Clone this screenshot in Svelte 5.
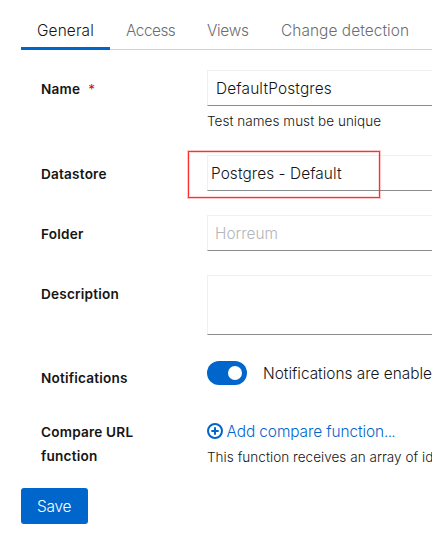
<script>
  const tabs = [
    { label: 'General', current: true, key: 'general' },
    { label: 'Access', key: 'access' },
    { label: 'Views', key: 'views' },
    { label: 'Change detection', key: 'change' }
  ];
</script>

<main>
  <nav>
    {#each tabs as tab}
      <button class="tab {tab.key}" class:current={tab.current}>{tab.label}</button>
    {/each}
  </nav>

  <form>
    <div class="row name">
      <div class="label">Name<span class="required">*</span></div>
      <div class="control">
        <div class="field wide">DefaultPostgres</div>
        <div class="helper">Test names must be unique</div>
      </div>
    </div>
    <div class="row datastore">
      <div class="label">Datastore</div>
      <div class="control">
        <div class="field select">Postgres - Default</div>
        <div class="highlight"></div>
      </div>
    </div>
    <div class="row folder">
      <div class="label">Folder</div>
      <div class="control"><div class="field placeholder">Horreum</div></div>
    </div>
    <div class="row description">
      <div class="label">Description</div>
      <div class="control"><div class="field area"></div></div>
    </div>
    <div class="row notifications">
      <div class="label">Notifications</div>
      <div class="control switch-line">
        <span class="switch"><i></i></span><span>Notifications are enabled</span>
      </div>
    </div>
    <div class="row compare">
      <div class="label">Compare URL<br />function</div>
      <div class="control">
        <div class="link">
          <svg viewBox="0 0 16 16" width="16" height="16" fill="none" stroke="currentColor" stroke-width="2">
            <circle cx="8" cy="8" r="7" /><path d="M8 4.3v7.4M4.3 8h7.4" />
          </svg>
          <span>Add compare function<span class="dots">...</span></span>
        </div>
        <div class="helper">This function receives an array of ids</div>
      </div>
    </div>
  </form>

  <button class="save">Save</button>
</main>

<style>
  :global(body) { background: #fff; overflow: hidden; }
  main {
    box-sizing: border-box;
    width: 432px;
    height: 541px;
    padding: 12px 0 0 21px;
    overflow: hidden;
    font: 300 15.4px/24px Inter, "Noto Sans", sans-serif;
    color: #151515;
    white-space: nowrap;
  }
  nav { display: flex; height: 38px; box-shadow: inset 0 -1px #d2d2d2; }
  button { font: inherit; border: 0; background: none; padding: 0; margin: 0; text-align: left; }
  .tab { flex: none; padding: 0 0 1px 16px; color: #6a6e73; }
  .current { color: #151515; box-shadow: inset 0 -3px #06c; }
  .general { width: 89px; letter-spacing: 0.15px; }
  .access { width: 81px; letter-spacing: -0.5px; }
  .views { width: 74px; letter-spacing: -0.3px; }
  .change { width: 180px; letter-spacing: 0.08px; }
  form { padding: 20px 0 0 20px; }
  .row { display: flex; }
  .name { height: 85px; }
  .datastore, .folder { height: 60px; }
  .description { height: 84px; }
  .notifications { height: 58px; }
  .compare { height: 67px; }
  .label {
    width: 166px;
    flex: none;
    padding-top: 7px;
    font-size: 13.6px;
    font-weight: 600;
    letter-spacing: 0.2px;
  }
  .compare .label { padding-top: 3px; }
  .required { color: #c9190b; margin-left: 8px; font-weight: 400; }
  .control { width: 225px; flex: none; position: relative; }
  .field {
    box-sizing: border-box;
    width: 300px;
    height: 36px;
    padding: 6px 7px 4px;
    border: 1px solid #f0f0f0;
    border-bottom-color: #8a8d90;
  }
  .wide { padding-left: 8px; letter-spacing: 0.16px; }
  .select { padding-left: 3px; letter-spacing: 0.08px; }
  .placeholder { color: #b4b5b7; }
  .area { height: 60px; }
  .helper { font-size: 13.5px; line-height: 21px; padding-top: 5px; letter-spacing: 0.04px; }
  .highlight {
    position: absolute;
    left: -19px;
    top: -4px;
    width: 190px;
    height: 45px;
    border: 1px solid #ff3030;
    box-shadow: 0 0 0 1px #ff303048, inset 0 0 0 1px #ff303030;
  }
  .switch-line { display: flex; align-items: flex-start; padding-top: 2px; line-height: 26px; }
  .switch {
    width: 40px;
    height: 24px;
    box-sizing: border-box;
    border-radius: 12px;
    background: #06c;
    padding: 5px 5px 5px 21px;
    margin-right: 16px;
    flex: none;
  }
  .switch i { display: block; width: 14px; height: 14px; border-radius: 50%; background: #fff; }
  .link { display: flex; color: #06c; padding-top: 3px; height: 24px; letter-spacing: -0.08px; }
  .link svg { margin: 3px 3.5px 0 0; flex: none; }
  .dots { letter-spacing: -0.7px; }
  .compare .helper { padding-top: 3px; }
  .save {
    display: block;
    width: 67px;
    height: 36px;
    border-radius: 3px;
    background: #06c;
    color: #fff;
    padding: 2px 0 0 16px;
    margin-top: 4px;
    letter-spacing: -0.2px;
  }
</style>
